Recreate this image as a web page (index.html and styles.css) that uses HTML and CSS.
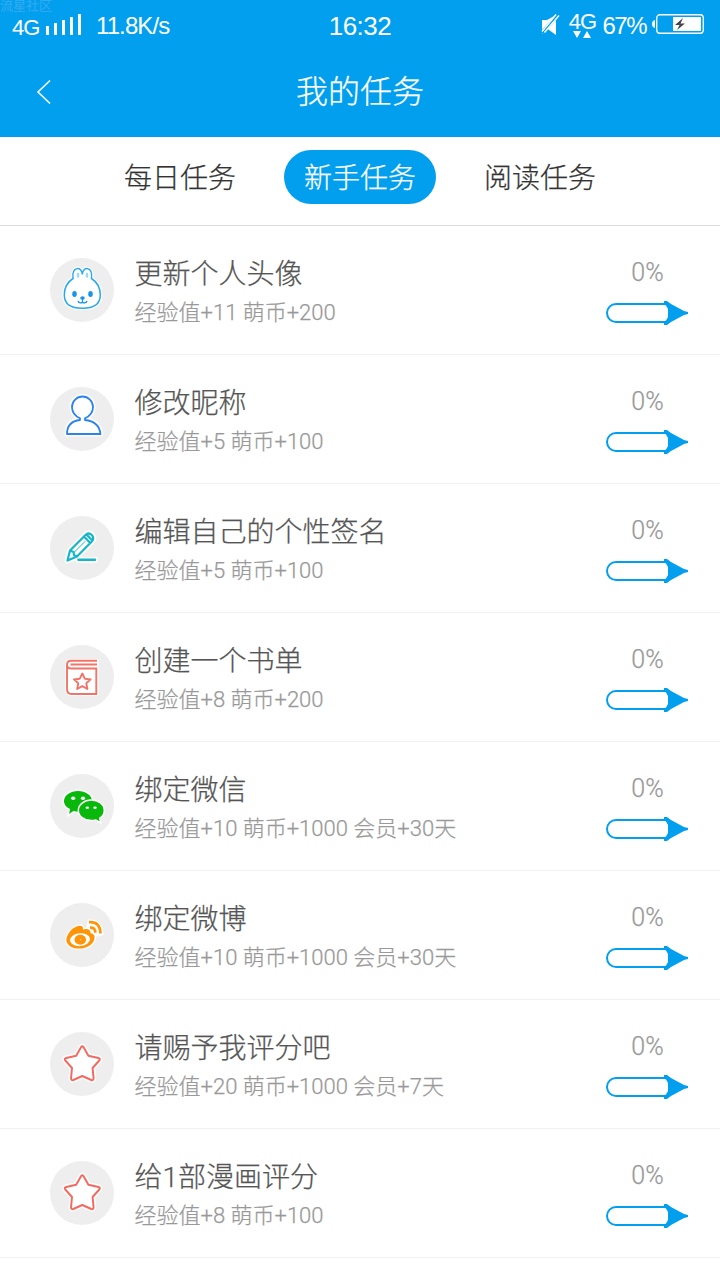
FILE: index.html
```html
<!DOCTYPE html>
<html lang="zh-CN">
<head>
<meta charset="utf-8">
<title>我的任务</title>
<link rel="stylesheet" href="styles.css">
</head>
<body>
<svg class="defs" width="0" height="0">
  <symbol id="arrow" viewBox="0 0 84 24">
    <path d="M61 3H11a9 9 0 0 0 0 18h50" fill="#fff" stroke="#029fef" stroke-width="2"/>
    <path d="M59 0h3l4 3 13 7 4 1v2l-4 1-13 7-4 3h-3v-3.500l2-1 2-3.500v-8l-2-3.500-2-1z" fill="#029fef"/>
  </symbol>
  <symbol id="star" viewBox="0 0 64 64">
    <path d="M31 15.300q1.300-2 2.600 0l4.800 8.400 10 2.200q2.400.7.9 2.600l-6.700 7.500 1 10.500q-.2 2.200-2.300 1.500l-9-4-9 4q-2.100.7-2.300-1.500l1-10.500-6.700-7.500q-1.500-1.900.9-2.600l10-2.200z" fill="#fff" stroke="#fff" stroke-width="5" stroke-linejoin="round"/>
    <path d="M31 15.300q1.300-2 2.600 0l4.800 8.400 10 2.200q2.400.7.9 2.600l-6.700 7.500 1 10.500q-.2 2.200-2.300 1.500l-9-4-9 4q-2.100.7-2.300-1.500l1-10.500-6.700-7.500q-1.500-1.900.9-2.600l10-2.200z" fill="#fff" stroke="#f46a60" stroke-width="2" stroke-linejoin="round"/>
  </symbol>
</svg>
<header class="header">
  <span class="watermark">流星社区</span>
  <div class="status">
    <div class="status-left">
      <span class="network">4G</span>
      <svg class="signal" width="36" height="21" viewBox="0 0 36 21" fill="#fff"><path d="M0 12h3v9H0zM8 9h3v12H8zM16 6h3v15h-3zM24 3h3v18h-3zM32 0h3v21h-3z"/></svg>
      <span class="speed">11.8K/s</span>
    </div>
    <span class="clock">16:32</span>
    <div class="status-right">
      <svg class="mute" width="19" height="21" viewBox="0 0 19 21"><path d="M1 6h5l9-5v20L6 14.500l-3 5H1z" fill="#fff"/><path d="M1 19L17 1" stroke="#029fef" stroke-width="4"/><path d="M1 17.500L15 .5M3.500 18.500L18 1.500" stroke="#fff" stroke-width="1.500"/></svg>
      <div class="data"><span>4G</span><svg width="18" height="7" viewBox="0 0 18 7" fill="#fff"><path d="M0 0h8L4 7zM10 7h8l-4-7z"/></svg></div>
      <span class="percent">67%</span>
      <svg class="battery" width="52" height="20" viewBox="0 0 52 20"><path d="M3 6v8q-3-.5-3-4t3-4z" fill="#fff"/><rect x="4.750" y=".75" width="46.500" height="18.500" rx="3" fill="none" stroke="#fff" stroke-width="1.300"/><path d="M21 3h28v14H21z" fill="#fff"/><path d="M31 4l-8 7h4.500L25 16l8-6.500h-4.500z" fill="#45484b"/></svg>
    </div>
  </div>
  <div class="navbar">
    <svg class="back" width="15" height="26" viewBox="0 0 15 26"><path d="M14 1.500L2 13l12 11.500" fill="none" stroke="#fff" stroke-width="1.600"/></svg>
    <h1>我的任务</h1>
  </div>
</header>
<nav class="tabs"><span class="tab">每日任务</span><span class="tab active">新手任务</span><span class="tab">阅读任务</span></nav>
<main class="tasks">
  <div class="task">
    <svg class="icon" viewBox="0 0 64 64"><path d="M23 20.500C21.500 8 32 8 32.300 16.500 32.600 8 43 8 41.500 20.500 47 24 50.300 30 50.300 37 50.300 47 43 50.300 32.300 50.300S14.300 47 14.300 37C14.300 30 17.500 24 23 20.500z" fill="#fff" stroke="#fff" stroke-width="4"/><path d="M23 20.500C21.500 8 32 8 32.300 16.500 32.600 8 43 8 41.500 20.500 47 24 50.300 30 50.300 37 50.300 47 43 50.300 32.300 50.300S14.300 47 14.300 37C14.300 30 17.500 24 23 20.500z" fill="#fff" stroke="#29a8ee" stroke-width="1.500"/><path d="M28 16v2.500M37 16v2.500" stroke="#9bd8fa" stroke-width="2.500" stroke-linecap="round"/><g fill="#1795e8"><ellipse cx="24.500" cy="36" rx="2.300" ry="2.900"/><ellipse cx="40.500" cy="36" rx="2.300" ry="2.900"/><ellipse cx="32.500" cy="40" rx="2.300" ry="1.800"/></g><path d="M32.500 40v4M28 43q1 2.800 4.500 1.300Q36 45.800 37 43" fill="none" stroke="#1795e8" stroke-width="1.300"/></svg>
    <div class="info"><h2>更新个人头像</h2><p>经验值+11 萌币+200</p></div>
    <div class="progress"><span>0%</span><svg class="arrow"><use href="#arrow"/></svg></div>
  </div>
  <div class="task">
    <svg class="icon" viewBox="0 0 64 64"><path d="M17 47Q17 34 30 32.500V31.300C24 28.500 22 24.500 22 20A10.500 10.500 0 0 1 43 20C43 24.500 41 28.500 35 31.300V32.500Q49 34 50.500 47z" fill="#fff" stroke="#fff" stroke-width="5" stroke-linejoin="round"/><path d="M17 47Q17 34.500 30 33V31.300C24 28.500 22 24.500 22 20A10.500 10.500 0 0 1 43 20C43 24.500 41 28.500 35 31.300V33Q49 34.500 50.500 47z" fill="#fff" stroke="#2d83ec" stroke-width="1.800" stroke-linejoin="round"/></svg>
    <div class="info"><h2>修改昵称</h2><p>经验值+5 萌币+100</p></div>
    <div class="progress"><span>0%</span><svg class="arrow"><use href="#arrow"/></svg></div>
  </div>
  <div class="task">
    <svg class="icon" viewBox="0 0 64 64"><g fill="#fff" stroke="#fff" stroke-width="6" stroke-linejoin="round" stroke-linecap="round"><path d="M17.500 44.500L20 34.500 35.500 19q3-3 6.300 0 3 3.500 0 6.500L27 40.500zM28.500 43.700h16.500"/></g><g fill="none" stroke="#16b6c8" stroke-width="2.200" stroke-linejoin="round" stroke-linecap="round"><path d="M17.500 44.500L20 34.500 35.500 19q3-3 6.300 0 3 3.500 0 6.500L27 40.500zM20 34.500l3.500 1.500.5 3 3 1.500M34 20.500l6.300 6.500M36.500 18.500l5.800 6"/><path d="M24 36.500L35 25.500" stroke-width="1"/><path d="M28.500 43.700h16.500" stroke-width="2.600"/></g></svg>
    <div class="info"><h2>编辑自己的个性签名</h2><p>经验值+5 萌币+100</p></div>
    <div class="progress"><span>0%</span><svg class="arrow"><use href="#arrow"/></svg></div>
  </div>
  <div class="task">
    <svg class="icon" viewBox="0 0 64 64"><path d="M15 20q0-6 5-6h28.500v37H20q-5-1-5-6z" fill="#fff"/><g fill="none" stroke="#f27468" stroke-width="1.900"><path d="M47 15.700H21q-4 0-4 4V44q0 5 4.500 5H46.300V23.500H21q-4 0-4-4M47 19.500H20.500"/><path d="M32.300 28.500l2.500 5.200 5.900.7-4.400 3.900 1.100 5.700-5.100-2.900-5.100 2.900 1.100-5.700-4.400-3.900 5.900-.7z" stroke-linejoin="round"/></g></svg>
    <div class="info"><h2>创建一个书单</h2><p>经验值+8 萌币+200</p></div>
    <div class="progress"><span>0%</span><svg class="arrow"><use href="#arrow"/></svg></div>
  </div>
  <div class="task">
    <svg class="icon" viewBox="0 0 64 64"><g fill="#08b80b" stroke="#fff" stroke-width="1.500"><path d="M28 16.200c8 0 14.800 4.700 14.800 11S36 38.400 28 38.400q-2.500 0-4.500-.6L18 41.500l1.200-6C15.700 33.500 13.200 30.500 13.200 27.200c0-6.300 6.800-11 14.800-11z"/><path d="M41.300 26c7.200 0 13 4.500 13 10.400 0 3.300-1.800 6-4.500 7.800l1 4.800-4.900-3q-2 .6-4.600.6c-7.200 0-13-4.500-13-10.200S34.100 26 41.300 26z"/></g><g fill="#fff"><ellipse cx="23.200" cy="24.300" rx="2.100" ry="1.700"/><ellipse cx="33" cy="24.300" rx="2.100" ry="1.700"/><ellipse cx="37.300" cy="33.700" rx="1.700" ry="1.300"/><ellipse cx="45" cy="33.700" rx="1.700" ry="1.300"/></g></svg>
    <div class="info"><h2>绑定微信</h2><p>经验值+10 萌币+1000 会员+30天</p></div>
    <div class="progress"><span>0%</span><svg class="arrow"><use href="#arrow"/></svg></div>
  </div>
  <div class="task">
    <svg class="icon" viewBox="0 0 64 64"><g fill="#fff" stroke="#fff" stroke-width="3" stroke-linejoin="round"><path d="M29 23q4-1 3.500 4 8-3 8 3 4.500 1 4 5C43.500 42 36 45.300 29 45.300S16.700 42 16.700 36.700C17 30 24 24 29 23z"/><path d="M39 18q12-1 13 13l-5 1-9-7z"/></g><path d="M28 22.900q5.500-1 5 3.500 7.500-1.500 7.500 3.500 4.500 1 4 5.300C43.500 42 36 45.500 29 45.500S16.300 42 16.300 36.700C17 30 23 24 28 22.900z" fill="#ff9408"/><ellipse cx="30" cy="36.700" rx="10" ry="6.400" fill="#fff" transform="rotate(-5 30 36.700)"/><ellipse cx="30.300" cy="36.700" rx="5.800" ry="5" fill="#ff9408"/><circle cx="30.500" cy="36.700" r=".7" fill="#ffe0a8"/><path d="M39 19.200q11-1 11.500 11.300M40 24.700q5.500-.3 5.300 5" fill="none" stroke="#ff9408" stroke-width="2.700"/></svg>
    <div class="info"><h2>绑定微博</h2><p>经验值+10 萌币+1000 会员+30天</p></div>
    <div class="progress"><span>0%</span><svg class="arrow"><use href="#arrow"/></svg></div>
  </div>
  <div class="task">
    <svg class="icon" viewBox="0 0 64 64"><use href="#star"/></svg>
    <div class="info"><h2>请赐予我评分吧</h2><p>经验值+20 萌币+1000 会员+7天</p></div>
    <div class="progress"><span>0%</span><svg class="arrow"><use href="#arrow"/></svg></div>
  </div>
  <div class="task">
    <svg class="icon" viewBox="0 0 64 64"><use href="#star"/></svg>
    <div class="info"><h2>给1部漫画评分</h2><p>经验值+8 萌币+100</p></div>
    <div class="progress"><span>0%</span><svg class="arrow"><use href="#arrow"/></svg></div>
  </div>
</main>
</body>
</html>
```
FILE: styles.css
```css
* { box-sizing: border-box; }
body {
  margin: 0;
  height: 1280px;
  overflow: hidden;
  background: #fff;
  font-family: Roboto, "Noto Sans CJK SC", sans-serif;
  font-weight: 300;
  color: #555;
  -webkit-text-stroke-width: .25px;
}
h1, h2, p { margin: 0; font-weight: 300; white-space: nowrap; }
svg { display: block; flex: none; }
.defs { position: absolute; }
.header { height: 137px; background: #029fef; color: #fff; position: relative; }
.watermark { position: absolute; left: 0; top: -1px; font-size: 13px; line-height: 14px; color: #38adf0; }
.status {
  display: grid;
  grid-template-columns: 1fr auto 1fr;
  height: 50px;
  font-family: "Liberation Sans", sans-serif;
  font-weight: 400;
  font-size: 24px;
  line-height: 28px;
  -webkit-text-stroke-width: 0;
}
.status-left { display: flex; padding-left: 12px; }
.network { padding-top: 14px; font-size: 22px; width: 34px; letter-spacing: -1px; }
.signal { margin-top: 14px; }
.speed { padding-top: 12px; margin-left: 14px; letter-spacing: -.9px; }
.clock { padding-top: 12px; font-size: 26px; letter-spacing: -.5px; }
.status-right { display: flex; justify-content: flex-end; padding-right: 16px; }
.mute { margin: 14px 8px 0 0; }
.data { display: flex; flex-direction: column; align-items: center; padding-top: 11px; width: 28px; font-size: 22px; line-height: 22px; letter-spacing: -1px; }
.data svg { margin-top: -2px; }
.percent { padding-top: 12px; margin: 0 6px 0 6px; letter-spacing: -1.5px; }
.battery { margin-top: 14px; }
.navbar { display: grid; grid-template-columns: 52px 1fr 52px; align-items: center; height: 84px; }
.back { margin-left: 36px; }
.navbar h1 { font-size: 32px; line-height: 44px; text-align: center; }
.tabs { display: flex; justify-content: center; gap: 28px; height: 89px; padding-top: 13px; border-bottom: 1px solid #ddd; }
.tab { width: 152px; height: 54px; border-radius: 27px; font-size: 28px; line-height: 58px; text-align: center; color: #333; }
.tab.active { background: #029fef; color: #fff; }
.task { display: flex; height: 129px; padding: 32px 31px 0 50px; border-bottom: 1px solid #f1f1f1; }
.icon { width: 64px; height: 64px; border-radius: 50%; background: #eee; }
.info { flex: 1; margin-left: 20.5px; }
.info h2 { font-size: 28px; line-height: 32px; padding-top: 1px; color: #555; }
.info p { font-size: 22px; line-height: 28px; margin-top: 8px; color: #999; }
.progress { width: 84px; }
.progress span { display: block; text-align: center; font-size: 25px; line-height: 28px; padding: 1px 0 0 1px; color: #999; }
.arrow { width: 84px; height: 24px; margin-top: 14px; }
```
